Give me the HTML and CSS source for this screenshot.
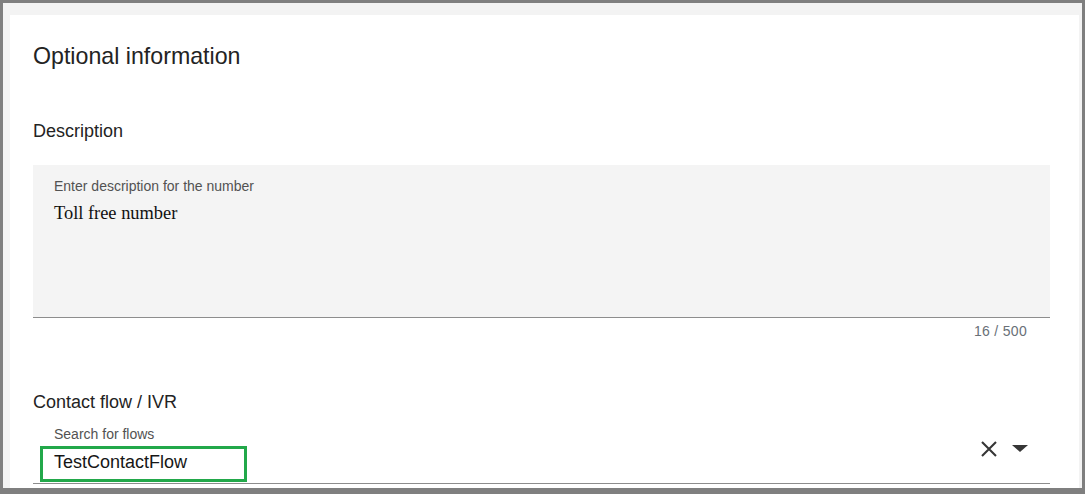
FILE: index.html
```html
<!DOCTYPE html>
<html lang="en">
<head>
<meta charset="utf-8">
<title>Optional information</title>
<link rel="stylesheet" href="styles.css">
</head>
<body>
<div class="frame">
  <section class="card">
    <h1 class="card-title">Optional information</h1>

    <h2 class="section-label section-label--first">Description</h2>
    <div class="textarea">
      <div class="field-label">Enter description for the number</div>
      <div class="textarea-value">Toll free number</div>
    </div>
    <div class="helper">16 / 500</div>

    <h2 class="section-label section-label--second">Contact flow / IVR</h2>
    <div class="combo">
      <div class="combo-main">
        <div class="field-label">Search for flows</div>
        <div class="combo-value"><span class="highlight-wrap">TestContactFlow<span class="highlight"></span></span></div>
      </div>
      <div class="combo-icons">
        <svg class="icon-close" width="16" height="16" viewBox="0 0 16 16" aria-hidden="true">
          <path d="M1 1 L15 15 M15 1 L1 15" stroke="#363636" stroke-width="2.1" fill="none"/>
        </svg>
        <svg class="icon-caret" width="16" height="8" viewBox="0 0 16 8" aria-hidden="true">
          <path d="M0 0 H16 L8 7 Z" fill="#363636"/>
        </svg>
      </div>
    </div>
  </section>
</div>
</body>
</html>
```

FILE: styles.css
```css
* {
  box-sizing: border-box;
}

html, body {
  margin: 0;
  padding: 0;
  background: #f3f3f3;
}

.frame {
  width: 1085px;
  height: 494px;
  border-style: solid;
  border-color: #7f7f7f;
  border-width: 3px 3px 6px 3px;
  background: #f3f3f3;
  padding: 12px 3px 0 7px;
  overflow: hidden;
  font-family: "Liberation Sans", Arial, sans-serif;
}

.card {
  background: #ffffff;
  height: 600px;
  padding: 27px 29px 0 23px;
}

.card-title {
  margin: 0;
  font-size: 23.2px;
  line-height: 28px;
  font-weight: 400;
  color: #232323;
}

.section-label {
  margin: 0;
  font-size: 18px;
  line-height: 22px;
  font-weight: 400;
  color: #232323;
}

.section-label--first {
  margin-top: 50px;
}

.section-label--second {
  margin-top: 52px;
}

.textarea {
  margin-top: 23px;
  height: 153px;
  background: #f4f4f4;
  border-bottom: 1px solid #8d8d8d;
  padding: 13px 21px 0 21px;
}

.field-label {
  font-size: 14px;
  line-height: 16px;
  color: #525252;
}

.textarea-value {
  margin-top: 8px;
  font-family: "Liberation Serif", "Times New Roman", serif;
  font-size: 18.4px;
  line-height: 22px;
  color: #111111;
}

.helper {
  margin-top: 5px;
  padding-right: 23px;
  text-align: right;
  font-size: 14px;
  line-height: 16px;
  letter-spacing: 0.3px;
  color: #697077;
}

.combo {
  margin-top: 13px;
  display: flex;
  border-bottom: 1px solid #8d8d8d;
  padding: 0 22px 0 21px;
}

.combo-main {
  flex: 1;
}

.combo-value {
  margin-top: 9px;
  padding-bottom: 10px;
  font-size: 18px;
  line-height: 22px;
  color: #161616;
}

.highlight-wrap {
  position: relative;
  display: inline-block;
}

.highlight {
  position: absolute;
  left: -14px;
  top: -5px;
  width: 207px;
  height: 36px;
  border: 3px solid #22a84a;
}

.combo-icons {
  display: flex;
  align-items: center;
  gap: 15px;
  height: 16px;
  margin-top: 15px;
}

.icon-close,
.icon-caret {
  display: block;
}
```
